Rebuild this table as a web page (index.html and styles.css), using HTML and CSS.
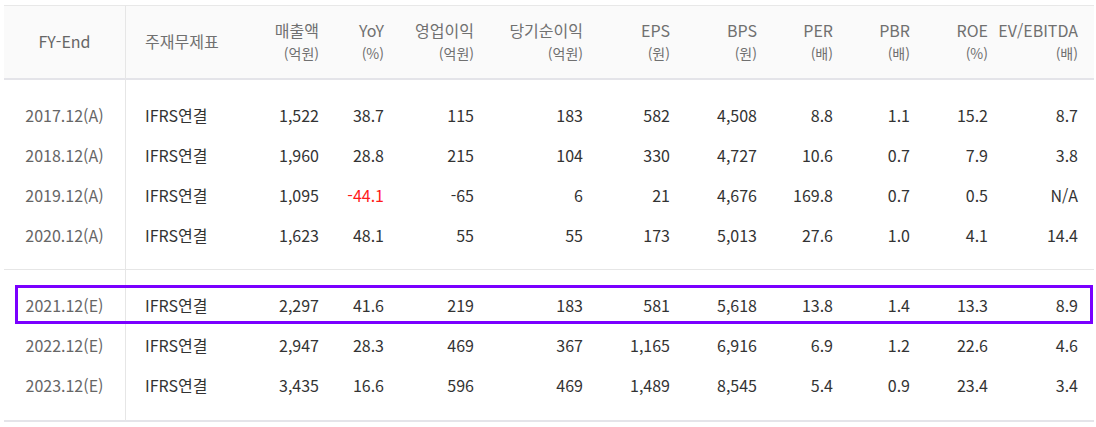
FILE: index.html
```html
<!DOCTYPE html>
<html lang="ko">
<head>
<meta charset="utf-8">
<title>재무 요약</title>
<link rel="stylesheet" href="styles.css">
</head>
<body>
<table class="fin">
  <colgroup>
    <col class="c-fy"><col class="c-std"><col class="c-sales"><col class="c-yoy"><col class="c-op"><col class="c-net"><col class="c-eps"><col class="c-bps"><col class="c-per"><col class="c-pbr"><col class="c-roe"><col class="c-ev">
  </colgroup>
  <thead>
    <tr>
      <th class="fy">FY-End</th>
      <th class="std">주재무제표</th>
      <th class="num">매출액<span class="unit">(억원)</span></th>
      <th class="num">YoY<span class="unit">(%)</span></th>
      <th class="num">영업이익<span class="unit">(억원)</span></th>
      <th class="num">당기순이익<span class="unit">(억원)</span></th>
      <th class="num">EPS<span class="unit">(원)</span></th>
      <th class="num">BPS<span class="unit">(원)</span></th>
      <th class="num">PER<span class="unit">(배)</span></th>
      <th class="num">PBR<span class="unit">(배)</span></th>
      <th class="num">ROE<span class="unit">(%)</span></th>
      <th class="num"><span class="wide">EV/EBITDA</span><span class="unit">(배)</span></th>
    </tr>
  </thead>
  <tbody class="grp">
    <tr class="gap"><td class="fy"></td><td colspan="11"></td></tr>
    <tr><td class="fy">2017.12(A)</td><td class="std">IFRS연결</td><td>1,522</td><td>38.7</td><td>115</td><td>183</td><td>582</td><td>4,508</td><td>8.8</td><td>1.1</td><td>15.2</td><td>8.7</td></tr>
    <tr><td class="fy">2018.12(A)</td><td class="std">IFRS연결</td><td>1,960</td><td>28.8</td><td>215</td><td>104</td><td>330</td><td>4,727</td><td>10.6</td><td>0.7</td><td>7.9</td><td>3.8</td></tr>
    <tr><td class="fy">2019.12(A)</td><td class="std">IFRS연결</td><td>1,095</td><td class="neg">-44.1</td><td>-65</td><td>6</td><td>21</td><td>4,676</td><td>169.8</td><td>0.7</td><td>0.5</td><td>N/A</td></tr>
    <tr><td class="fy">2020.12(A)</td><td class="std">IFRS연결</td><td>1,623</td><td>48.1</td><td>55</td><td>55</td><td>173</td><td>5,013</td><td>27.6</td><td>1.0</td><td>4.1</td><td>14.4</td></tr>
    <tr class="gap gap-end"><td class="fy"></td><td colspan="11"></td></tr>
  </tbody>
  <tbody class="grp last">
    <tr class="gap"><td class="fy"></td><td colspan="11"></td></tr>
    <tr class="hl"><td class="fy">2021.12(E)</td><td class="std">IFRS연결</td><td>2,297</td><td>41.6</td><td>219</td><td>183</td><td>581</td><td>5,618</td><td>13.8</td><td>1.4</td><td>13.3</td><td>8.9</td></tr>
    <tr><td class="fy">2022.12(E)</td><td class="std">IFRS연결</td><td>2,947</td><td>28.3</td><td>469</td><td>367</td><td>1,165</td><td>6,916</td><td>6.9</td><td>1.2</td><td>22.6</td><td>4.6</td></tr>
    <tr><td class="fy">2023.12(E)</td><td class="std">IFRS연결</td><td>3,435</td><td>16.6</td><td>596</td><td>469</td><td>1,489</td><td>8,545</td><td>5.4</td><td>0.9</td><td>23.4</td><td>3.4</td></tr>
    <tr class="gap gap-end"><td class="fy"></td><td colspan="11"></td></tr>
  </tbody>
</table>
</body>
</html>
```
FILE: styles.css
```css
html, body {
  margin: 0;
  padding: 0;
  background: #ffffff;
}

body {
  font-family: "Noto Sans CJK KR", "Noto Sans", sans-serif;
  color: #333333;
}

.fin {
  margin: 5px 0 0 4px;
  width: 1090px;
  table-layout: fixed;
  border-collapse: separate;
  border-spacing: 0;
}

.c-fy { width: 122px; }
.c-std { width: 119px; }
.c-sales { width: 90px; }
.c-yoy { width: 65px; }
.c-op { width: 90px; }
.c-net { width: 109px; }
.c-eps { width: 87px; }
.c-bps { width: 87px; }
.c-per { width: 76px; }
.c-pbr { width: 77px; }
.c-roe { width: 78px; }
.c-ev { width: 90px; }

.fin th,
.fin td {
  padding: 0 16px 0 0;
  text-align: right;
  white-space: nowrap;
  overflow: visible;
}

.fin thead th {
  height: 70px;
  background: #fafafa;
  border-top: 1px solid #e8e8e8;
  border-bottom: 2px solid #e4e4e9;
  color: #707070;
  font-weight: 400;
  font-size: 16px;
  line-height: 23px;
  vertical-align: middle;
  padding-top: 0;
}

.fin thead th .unit {
  display: block;
  font-size: 14px;
  line-height: 23px;
}

.fin thead th .wide {
  display: block;
  margin-left: -24px;
}

.fin .fy {
  text-align: center;
  padding: 0;
  border-right: 1px solid #e6e6e6;
  color: #666666;
}

.fin thead th.fy,
.fin thead th.std {
  padding-bottom: 2px;
}

.fin .std {
  text-align: left;
  padding: 0 0 0 19px;
}

.fin thead th.std {
  padding-left: 19px;
}

.fin tbody td {
  height: 40px;
  font-size: 16px;
  line-height: 20px;
  vertical-align: middle;
}

.fin tbody tr.gap td {
  height: 15px;
  line-height: 0;
  font-size: 0;
}

.fin tbody.grp:first-of-type tr.gap-end td {
  height: 14px;
  border-bottom: 1px solid #e6e6e6;
}

.fin tbody.last tr.gap-end td {
  border-bottom: 2px solid #e4e4e9;
}

.fin td.neg {
  color: #ff1a1a;
}

.fin tr.hl td.fy {
  position: relative;
}

.fin tr.hl td.fy::after {
  content: "";
  position: absolute;
  left: 11px;
  top: 0;
  width: 1078px;
  height: 39px;
  box-sizing: border-box;
  border: 3px solid #7a00ff;
  pointer-events: none;
}
```
